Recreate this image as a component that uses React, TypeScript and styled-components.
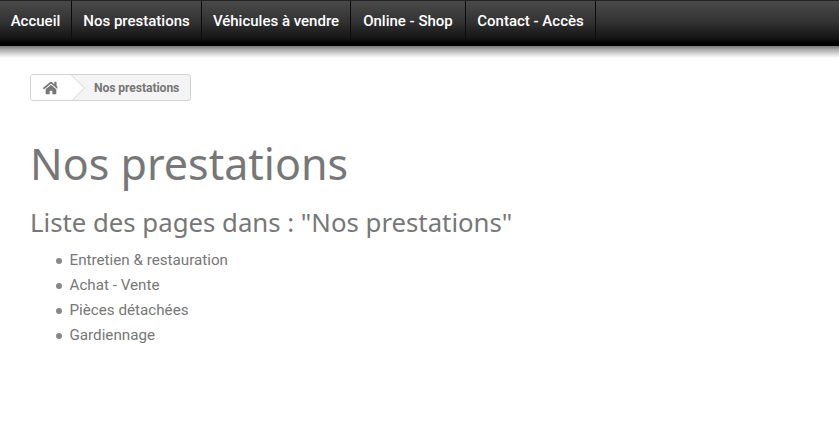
import styled, { createGlobalStyle } from "styled-components";
import { FaHome } from "react-icons/fa";

const GlobalStyle = createGlobalStyle`
  html, body {
    margin: 0;
    padding: 0;
    background: #fff;
    overflow: hidden;
  }
`;

const Page = styled.div`
  width: 839px;
  height: 429px;
  overflow: hidden;
  font-family: Roboto, sans-serif;
  color: #777;
`;

const MenuBar = styled.nav`
  display: flex;
  height: 46px;
  border-top: 1px solid #222;
  box-sizing: border-box;
  background: linear-gradient(to bottom, #4a4a4a 0%, #333 45%, #141414 84%, #000 92%, #000 100%);
`;

const MenuShadow = styled.div`
  height: 12px;
  background: linear-gradient(to bottom, #777 0%, #aaa 30%, #e4e4e4 75%, #fff 100%);
`;

const MenuLink = styled.a<{ $width: number }>`
  display: flex;
  align-items: center;
  justify-content: center;
  width: ${(props) => props.$width}px;
  height: 39px;
  box-sizing: border-box;
  border-right: 1px solid #0c0c0c;
  color: #fff;
  font-size: 15px;
  font-weight: 500;
  white-space: nowrap;
`;

const Content = styled.main`
  padding: 16px 30px 0;
`;

const Breadcrumb = styled.div`
  display: inline-flex;
  align-items: center;
  height: 25px;
  border: 1px solid #d4d4d4;
  border-radius: 3px;
  overflow: hidden;
  background: #f4f4f4;
`;

const HomeCrumb = styled.div`
  position: relative;
  display: flex;
  align-items: center;
  height: 100%;
  width: 40px;
  padding-left: 12px;
  box-sizing: border-box;
  background: #fff;
  color: #777;
  font-size: 16px;

  &::after {
    content: "";
    position: absolute;
    top: 3px;
    right: -10px;
    width: 19px;
    height: 19px;
    background: #fff;
    border-top: 1px solid #ddd;
    border-right: 1px solid #ddd;
    transform: rotate(45deg);
  }
`;

const CurrentCrumb = styled.span`
  padding: 0 11px 0 23px;
  font-size: 12.2px;
  font-weight: 700;
  letter-spacing: -0.1px;
  color: #777;
`;

const Title = styled.h1`
  margin: 33px 0 0;
  font-family: "Noto Sans", sans-serif;
  font-size: 43px;
  font-weight: 400;
  line-height: 60px;
  color: #777;
`;

const Subtitle = styled.h2`
  margin: 10px 0 0;
  font-family: "Noto Sans", sans-serif;
  font-size: 25.75px;
  font-weight: 400;
  line-height: 36px;
  color: #777;
`;

const PageList = styled.ul`
  margin: 8px 0 0;
  padding: 0 0 0 40px;
  list-style: none;
  font-size: 15.2px;
  line-height: 25px;
`;

const PageItem = styled.li`
  display: flex;
  align-items: center;

  &::before {
    content: "";
    width: 6px;
    height: 6px;
    margin: 0 7.5px 0 -14px;
    border-radius: 50%;
    background: #888;
  }
`;

const items = ["Entretien & restauration", "Achat - Vente", "Pièces détachées", "Gardiennage"];
const menu = [
  { label: "Accueil", width: 72 },
  { label: "Nos prestations", width: 130 },
  { label: "Véhicules à vendre", width: 149 },
  { label: "Online - Shop", width: 115 },
  { label: "Contact - Accès", width: 130 },
];

const App = () => {
  return (
    <Page>
      <GlobalStyle />
      <MenuBar>
        {menu.map((entry) => (
          <MenuLink key={entry.label} $width={entry.width}>
            {entry.label}
          </MenuLink>
        ))}
      </MenuBar>
      <MenuShadow />
      <Content>
        <Breadcrumb>
          <HomeCrumb>
            <FaHome />
          </HomeCrumb>
          <CurrentCrumb>Nos prestations</CurrentCrumb>
        </Breadcrumb>
        <Title>Nos prestations</Title>
        <Subtitle>Liste des pages dans : "Nos prestations"</Subtitle>
        <PageList>
          {items.map((item) => (
            <PageItem key={item}>{item}</PageItem>
          ))}
        </PageList>
      </Content>
    </Page>
  );
};

export default App;
